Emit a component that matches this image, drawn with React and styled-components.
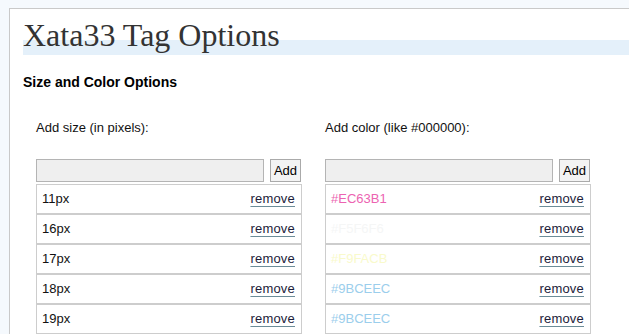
import React from "react";
import styled, { createGlobalStyle } from "styled-components";

const GlobalStyle = createGlobalStyle`
  html, body {
    margin: 0;
    padding: 0;
    overflow: hidden;
    background: #f5f9fd;
  }
`;

const Page = styled.div`
  padding: 8px 0 0 9px;
  font-family: "Liberation Sans", Arial, sans-serif;
`;

const Panel = styled.div`
  background: #fff;
  border-top: 1px solid #c9c9c9;
  border-left: 1px solid #c9c9c9;
  padding: 8px 0 0 13px;
  min-height: 330px;
`;

const Title = styled.h1`
  margin: 0;
  padding-bottom: 2px;
  font-family: "Liberation Serif", "Times New Roman", serif;
  font-weight: normal;
  font-size: 32px;
  line-height: 36px;
  color: #333;
  background: linear-gradient(transparent 23px, #e4f0fa 23px);
`;

const Section = styled.h2`
  margin: 19px 0 0;
  font-size: 14px;
  line-height: 17px;
  font-weight: bold;
  color: #000;
`;

const Columns = styled.div`
  display: grid;
  grid-template-columns: 266px 266px;
  column-gap: 23px;
  margin: 29px 0 0 13px;
`;

const Column = styled.div`
  display: flex;
  flex-direction: column;
`;

const Label = styled.div`
  font-size: 13px;
  line-height: 15px;
  color: #111;
  margin-bottom: 24px;
`;

const AddRow = styled.form`
  display: flex;
  gap: 6px;
  margin-bottom: 2px;
  padding-right: 1px;
`;

const Field = styled.input`
  flex: 1;
  height: 23px;
  box-sizing: border-box;
  border: 1px solid #b4b4b4;
  background: #efefef;
  margin: 0;
  padding: 0 4px;
`;

const AddButton = styled.button`
  width: 31px;
  height: 23px;
  box-sizing: border-box;
  border: 1px solid #aaa;
  background: #f3f3f3;
  font-family: "Liberation Sans", Arial, sans-serif;
  font-size: 13px;
  color: #000;
  padding: 0;
  margin: 0;
`;

const Item = styled.div`
  display: flex;
  justify-content: space-between;
  align-items: center;
  height: 28px;
  border: 1px solid #cdcdcd;
  padding: 0 6px 0 5px;
  font-size: 13px;
  line-height: 28px;
`;

const Value = styled.span`
  color: ${(p) => p.$color || "#111"};
`;

const Remove = styled.a`
  color: #1c1c3a;
  text-decoration: underline;
  text-decoration-color: #6c8c98;
  text-underline-offset: 3px;
  letter-spacing: 0.2px;
  cursor: pointer;
`;

const sizes = ["11px", "16px", "17px", "18px", "19px"];
const colors = ["#EC63B1", "#F5F6F6", "#F9FACB", "#9BCEEC", "#9BCEEC"];

const OptionList = ({ label, items, colored }) => (
  <Column>
    <Label>{label}</Label>
    <AddRow onSubmit={(e) => e.preventDefault()}>
      <Field type="text" />
      <AddButton type="submit">Add</AddButton>
    </AddRow>
    {items.map((it, i) => (
      <Item key={i}>
        <Value $color={colored ? it : null}>{it}</Value>
        <Remove>remove</Remove>
      </Item>
    ))}
  </Column>
);

export default function App() {
  return (
    <Page>
      <GlobalStyle />
      <Panel>
        <Title>Xata33 Tag Options</Title>
        <Section>Size and Color Options</Section>
        <Columns>
          <OptionList label="Add size (in pixels):" items={sizes} />
          <OptionList label="Add color (like #000000):" items={colors} colored />
        </Columns>
      </Panel>
    </Page>
  );
}
